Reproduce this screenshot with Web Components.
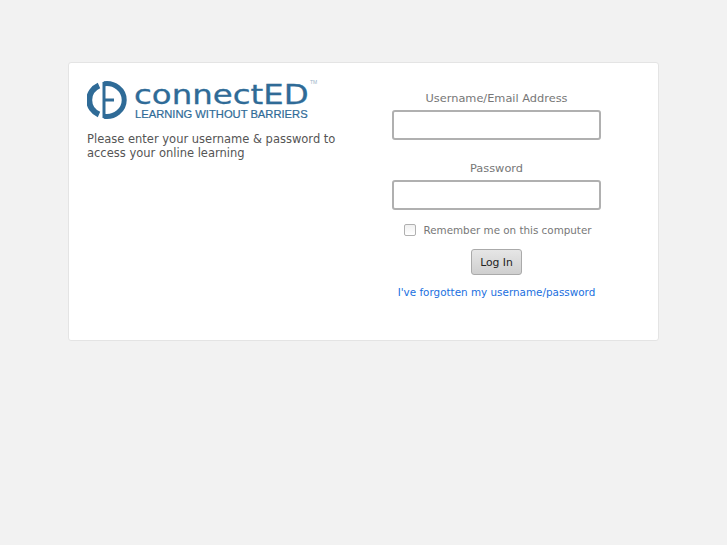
<!DOCTYPE html>
<html>
<head>
<meta charset="utf-8">
<title>connectED</title>
<style>
    html, body { margin: 0; padding: 0; background: #f2f2f2; }
    body { padding: 62px 68px 0; font-family: "DejaVu Sans", sans-serif; }
</style>
</head>
<body>
<login-card>
    <connected-logo slot="intro"></connected-logo>
    <span slot="intro-text">Please enter your username &amp; password to access your online learning</span>
    <form-field label="Username/Email Address" slot="form"></form-field>
    <form-field label="Password" type="password" slot="form"></form-field>
    <remember-me slot="form"></remember-me>
    <login-button slot="form">Log In</login-button>
    <a slot="form" href="#" style="color:#1a6fe0;font-size:10.4px;line-height:13px;white-space:nowrap;text-decoration:none;margin-top:11px">I've forgotten my username/password</a>
</login-card>

<script>
class LoginCard extends HTMLElement {
    constructor() {
        super();
        this.attachShadow({ mode: 'open' });
    }

    connectedCallback() {
        this.shadowRoot.innerHTML = `
            <style>
                :host {
                    display: grid;
                    grid-template-columns: 250px 209px;
                    column-gap: 55px;
                    width: 591px;
                    height: 279px;
                    box-sizing: border-box;
                    padding: 17px 0 0 18px;
                    background: #fff;
                    border: 1px solid #e4e4e4;
                    border-radius: 3px;
                    font-size: 11.5px;
                    color: #555;
                }
                .text {
                    margin-top: 11px;
                    line-height: 14px;
                    width: 260px;
                }
                .form {
                    display: flex;
                    flex-direction: column;
                    align-items: center;
                    padding-top: 11px;
                }
            </style>
            <div>
                <slot name="intro"></slot>
                <div class="text"><slot name="intro-text"></slot></div>
            </div>
            <div class="form"><slot name="form"></slot></div>
        `;
    }
}

class ConnectedLogo extends HTMLElement {
    constructor() {
        super();
        this.attachShadow({ mode: 'open' });
    }

    connectedCallback() {
        this.shadowRoot.innerHTML = `
            <style>
                :host {
                    display: flex;
                    gap: 8px;
                    height: 41px;
                    color: #2f6b97;
                    white-space: nowrap;
                }
                svg { flex: none; }
                .words {
                    position: relative;
                    display: flex;
                    flex-direction: column;
                    padding-top: 2px;
                }
                .name {
                    font: 27px/26px "DejaVu Sans", sans-serif;
                    -webkit-text-stroke: .3px #2f6b97;
                    transform: scaleX(1.2);
                    transform-origin: 0 0;
                    margin-left: -1px;
                }
                .tag {
                    font: 11.2px/13px "Liberation Sans", sans-serif;
                    -webkit-text-stroke: .2px #2f6b97;
                }
                .tm {
                    position: absolute;
                    left: 175px;
                    top: 0;
                    font: 5px/5px "Liberation Sans", sans-serif;
                    color: #9ab4c8;
                }
            </style>
            <svg width="40" height="40" viewBox="0 0 40 40" fill="none" stroke="#2f6b97">
                <path d="M12 5.5 A17 16 0 0 0 12 34.5" stroke-width="6"/>
                <path d="M17 3.7 A17.5 16.5 0 1 1 17 36.3" stroke-width="5"/>
                <path d="M17 2 V38" stroke-width="3"/>
                <path d="M17 20 H27" stroke-width="3"/>
            </svg>
            <div class="words">
                <div class="name">connectED</div>
                <div class="tag">LEARNING WITHOUT BARRIERS</div>
                <span class="tm">TM</span>
            </div>
        `;
    }
}

class FormField extends HTMLElement {
    constructor() {
        super();
        this.attachShadow({ mode: 'open' });
    }

    connectedCallback() {
        const type = this.getAttribute('type') || 'text';
        this.shadowRoot.innerHTML = `
            <style>
                :host {
                    display: flex;
                    flex-direction: column;
                    align-items: center;
                    width: 209px;
                    margin-bottom: 21px;
                }
                label {
                    font-size: 11.35px;
                    line-height: 15px;
                    color: #777;
                    margin-bottom: 4px;
                }
                input {
                    display: block;
                    width: 209px;
                    height: 30px;
                    box-sizing: border-box;
                    border: 2px solid #b0b0b0;
                    border-radius: 3px;
                    background: #fff;
                    margin: 0;
                    outline: none;
                }
            </style>
            <label>${this.getAttribute('label')}</label>
            <input type="${type}">
        `;
    }
}

class RememberMe extends HTMLElement {
    constructor() {
        super();
        this.attachShadow({ mode: 'open' });
    }

    connectedCallback() {
        this.shadowRoot.innerHTML = `
            <style>
                :host {
                    display: flex;
                    align-items: center;
                    gap: 7px;
                    height: 14px;
                    margin: -8px 0 0 3px;
                    font-size: 10.35px;
                    color: #777;
                }
                .box {
                    width: 12px;
                    height: 12px;
                    box-sizing: border-box;
                    border: 1px solid #b0b0b0;
                    border-radius: 2px;
                    background: linear-gradient(#f0f0f0, #fff);
                }
            </style>
            <span class="box"></span>
            <span>Remember me on this computer</span>
        `;
    }
}

class LoginButton extends HTMLElement {
    constructor() {
        super();
        this.attachShadow({ mode: 'open' });
    }

    connectedCallback() {
        this.shadowRoot.innerHTML = `
            <style>
                :host {
                    display: block;
                    margin-top: 12px;
                }
                button {
                    display: block;
                    width: 51px;
                    height: 26px;
                    padding: 0;
                    box-sizing: border-box;
                    border: 1px solid #aaa;
                    border-radius: 3px;
                    background: linear-gradient(#e6e6e6, #cfcfcf);
                    font: 10.8px "DejaVu Sans", sans-serif;
                    color: #222;
                }
            </style>
            <button><slot></slot></button>
        `;
    }
}

customElements.define('login-card', LoginCard);
customElements.define('connected-logo', ConnectedLogo);
customElements.define('form-field', FormField);
customElements.define('remember-me', RememberMe);
customElements.define('login-button', LoginButton);
</script>
</body>
</html>
